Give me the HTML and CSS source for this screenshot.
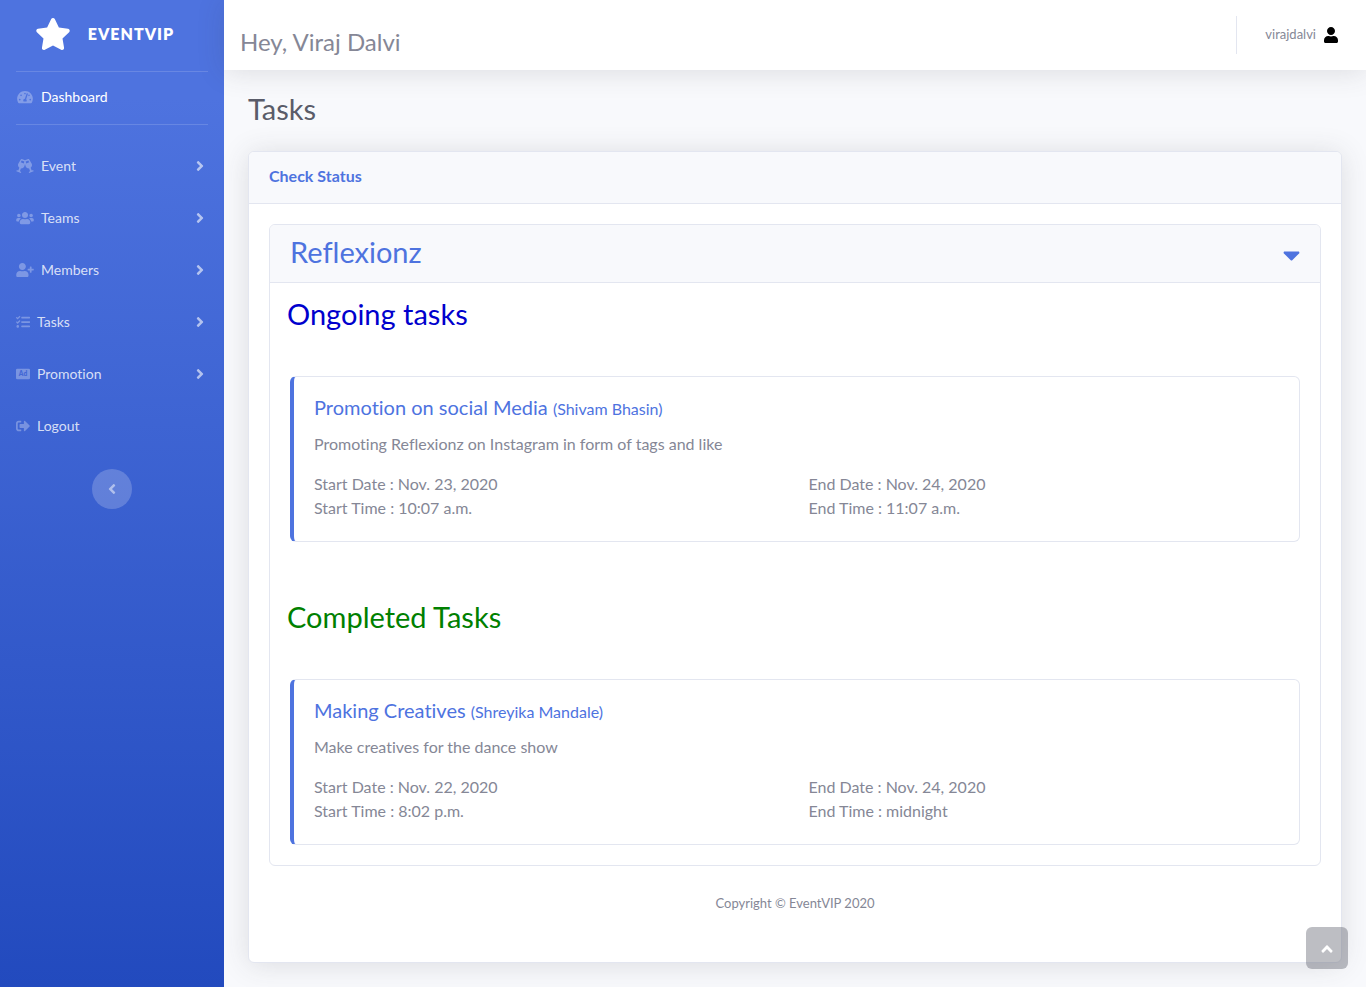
FILE: index.html
```html
<!DOCTYPE html>
<html lang="en">
<head>
<meta charset="utf-8">
<meta name="viewport" content="width=device-width, initial-scale=1">
<title>EventVIP - Tasks</title>
<link rel="stylesheet" href="styles.css">
</head>
<body>
<div class="wrapper">
  <nav class="sidebar" aria-label="Main">
    <a class="brand" href="#">
      <svg class="brand-icon" viewBox="0 0 576 512" aria-hidden="true"><path d="M259.3 17.8L194 150.2 47.9 171.5c-26.2 3.8-36.7 36.1-17.7 54.6l105.7 103-25 145.5c-4.5 26.3 23.2 46 46.4 33.7L288 439.6l130.7 68.7c23.2 12.2 50.9-7.4 46.4-33.7l-25-145.5 105.7-103c19-18.5 8.5-50.8-17.7-54.6L382 150.2 316.7 17.8c-11.7-23.6-45.6-23.9-57.4 0z"/></svg>
      <span>EVENTVIP</span>
    </a>
    <hr class="divider">
    <a class="nav-link active" href="#">
      <svg class="icon icon-wide" viewBox="0 0 576 512" aria-hidden="true"><path d="M288 32C128.94 32 0 160.94 0 320c0 52.8 14.25 102.26 39.06 144.8 5.61 9.62 16.3 15.2 27.44 15.2h443c11.14 0 21.83-5.58 27.44-15.2C561.75 422.26 576 372.8 576 320c0-159.06-128.94-288-288-288zm0 64c14.71 0 26.58 10.13 30.32 23.65-1.11 2.26-2.64 4.23-3.45 6.67l-9.22 27.67c-5.13 3.49-10.97 6.01-17.64 6.01-17.67 0-32-14.33-32-32S270.33 96 288 96zM96 384c-17.67 0-32-14.33-32-32s14.33-32 32-32 32 14.33 32 32-14.33 32-32 32zm48-160c-17.67 0-32-14.33-32-32s14.33-32 32-32 32 14.33 32 32-14.33 32-32 32zm246.77-72.41l-61.33 184C343.13 347.33 352 364.54 352 384c0 11.72-3.38 22.55-8.88 32H232.88c-5.5-9.45-8.88-20.28-8.88-32 0-33.94 26.5-61.43 59.9-63.59l61.34-184.01c4.17-12.56 17.73-19.45 30.36-15.17 12.57 4.19 19.35 17.79 15.17 30.36zm14.66 57.2l15.52-46.55c3.47-1.29 7.13-2.23 11.05-2.23 17.67 0 32 14.33 32 32s-14.33 32-32 32c-11.38-.01-20.89-6.28-26.57-15.22zM480 384c-17.67 0-32-14.33-32-32s14.33-32 32-32 32 14.33 32 32-14.33 32-32 32z"/></svg>
      <span>Dashboard</span>
    </a>
    <hr class="divider divider-gap">
    <a class="nav-link" href="#">
      <svg class="icon icon-wide" viewBox="0 0 640 512" aria-hidden="true"><path d="M639.4 433.6c-8.4-20.4-31.8-30.1-52.2-21.6l-22.1 9.2-38.7-101.9c47.9-35 64.8-100.3 34.5-152.8L474.3 16c-8-13.9-25.1-19.7-40-13.6L320 49.8 205.7 2.4c-14.9-6.2-32-.3-40 13.6L79.1 166.5C48.9 219 65.7 284.3 113.6 319.2L74.9 421.1l-22.1-9.2c-20.4-8.5-43.7 1.2-52.2 21.6-1.7 4.1.2 8.8 4.3 10.5l162.3 67.4c4.1 1.7 8.7-.2 10.4-4.3 8.4-20.4-1.2-43.8-21.6-52.3l-22.1-9.2L173.3 342c4.4.5 8.8 1.3 13.1 1.3 51.7 0 99.4-33.1 113.4-85.3l20.2-75.4 20.2 75.4c14 52.2 61.7 85.3 113.4 85.3 4.3 0 8.7-.8 13.1-1.3L506 445.6l-22.1 9.2c-20.4 8.5-30 31.9-21.6 52.3 1.7 4.1 6.4 6 10.4 4.3L635.1 444c4-1.7 6-6.3 4.3-10.4zM275.9 162.1l-112.1-46.5 36.5-63.4 94.5 39.2-18.9 70.7zm88.2 0l-18.9-70.7 94.5-39.2 36.5 63.4-112.1 46.5z"/></svg>
      <span>Event</span>
      <svg class="chevron" viewBox="0 0 256 512" aria-hidden="true"><path d="M224.3 273l-136 136c-9.4 9.4-24.6 9.4-33.9 0l-22.6-22.6c-9.4-9.4-9.4-24.6 0-33.9l96.4-96.4-96.4-96.4c-9.4-9.4-9.4-24.6 0-33.9L54.3 103c9.4-9.4 24.6-9.4 33.9 0l136 136c9.5 9.4 9.5 24.6.1 34z"/></svg>
    </a>
    <a class="nav-link" href="#">
      <svg class="icon icon-wide" viewBox="0 0 640 512" aria-hidden="true"><path d="M96 224c35.3 0 64-28.7 64-64s-28.7-64-64-64-64 28.7-64 64 28.7 64 64 64zm448 0c35.3 0 64-28.7 64-64s-28.7-64-64-64-64 28.7-64 64 28.7 64 64 64zm32 32h-64c-17.6 0-33.5 7.1-45.1 18.6 40.3 22.1 68.9 62 75.1 109.4h66c17.7 0 32-14.3 32-32v-32c0-35.3-28.7-64-64-64zm-256 0c61.9 0 112-50.1 112-112S381.9 32 320 32 208 82.1 208 144s50.1 112 112 112zm76.8 32h-8.3c-20.8 10-43.9 16-68.5 16s-47.6-6-68.5-16h-8.3C179.6 288 128 339.6 128 403.2V432c0 26.5 21.5 48 48 48h288c26.5 0 48-21.5 48-48v-28.8c0-63.6-51.6-115.2-115.2-115.2zm-223.7-13.4C161.5 263.1 145.6 256 128 256H64c-35.3 0-64 28.7-64 64v32c0 17.7 14.3 32 32 32h65.9c6.3-47.4 34.9-87.3 75.2-109.4z"/></svg>
      <span>Teams</span>
      <svg class="chevron" viewBox="0 0 256 512" aria-hidden="true"><path d="M224.3 273l-136 136c-9.4 9.4-24.6 9.4-33.9 0l-22.6-22.6c-9.4-9.4-9.4-24.6 0-33.9l96.4-96.4-96.4-96.4c-9.4-9.4-9.4-24.6 0-33.9L54.3 103c9.4-9.4 24.6-9.4 33.9 0l136 136c9.5 9.4 9.5 24.6.1 34z"/></svg>
    </a>
    <a class="nav-link" href="#">
      <svg class="icon icon-wide" viewBox="0 0 640 512" aria-hidden="true"><path d="M624 208h-64v-64c0-8.8-7.2-16-16-16h-32c-8.8 0-16 7.2-16 16v64h-64c-8.8 0-16 7.2-16 16v32c0 8.8 7.2 16 16 16h64v64c0 8.8 7.2 16 16 16h32c8.8 0 16-7.2 16-16v-64h64c8.8 0 16-7.2 16-16v-32c0-8.8-7.2-16-16-16zm-400 48c70.7 0 128-57.3 128-128S294.7 0 224 0 96 57.3 96 128s57.3 128 128 128zm89.6 32h-16.7c-22.2 10.2-46.9 16-72.9 16s-50.6-5.8-72.9-16h-16.7C60.2 288 0 348.2 0 422.4V464c0 26.5 21.5 48 48 48h352c26.5 0 48-21.5 48-48v-41.6c0-74.2-60.2-134.4-134.4-134.4z"/></svg>
      <span>Members</span>
      <svg class="chevron" viewBox="0 0 256 512" aria-hidden="true"><path d="M224.3 273l-136 136c-9.4 9.4-24.6 9.4-33.9 0l-22.6-22.6c-9.4-9.4-9.4-24.6 0-33.9l96.4-96.4-96.4-96.4c-9.4-9.4-9.4-24.6 0-33.9L54.3 103c9.4-9.4 24.6-9.4 33.9 0l136 136c9.5 9.4 9.5 24.6.1 34z"/></svg>
    </a>
    <a class="nav-link" href="#">
      <svg class="icon" viewBox="0 0 512 512" aria-hidden="true"><path d="M139.61 35.5a12 12 0 0 0-17 0L58.93 98.81l-22.7-22.12a12 12 0 0 0-17 0L3.53 92.41a12 12 0 0 0 0 17l47.59 47.4a12.78 12.78 0 0 0 17.61 0l15.59-15.62L156.52 69a12.09 12.09 0 0 0 .09-17zm0 159.19a12 12 0 0 0-17 0l-63.68 63.72-22.7-22.1a12 12 0 0 0-17 0L3.53 252a12 12 0 0 0 0 17L51 316.5a12.77 12.77 0 0 0 17.6 0l15.7-15.69 72.2-72.22a12 12 0 0 0 .09-16.9zM64 368c-26.49 0-48.59 21.5-48.59 48S37.53 464 64 464a48 48 0 0 0 0-96zm432 16H208a16 16 0 0 0-16 16v32a16 16 0 0 0 16 16h288a16 16 0 0 0 16-16v-32a16 16 0 0 0-16-16zm0-320H208a16 16 0 0 0-16 16v32a16 16 0 0 0 16 16h288a16 16 0 0 0 16-16V80a16 16 0 0 0-16-16zm0 160H208a16 16 0 0 0-16 16v32a16 16 0 0 0 16 16h288a16 16 0 0 0 16-16v-32a16 16 0 0 0-16-16z"/></svg>
      <span>Tasks</span>
      <svg class="chevron" viewBox="0 0 256 512" aria-hidden="true"><path d="M224.3 273l-136 136c-9.4 9.4-24.6 9.4-33.9 0l-22.6-22.6c-9.4-9.4-9.4-24.6 0-33.9l96.4-96.4-96.4-96.4c-9.4-9.4-9.4-24.6 0-33.9L54.3 103c9.4-9.4 24.6-9.4 33.9 0l136 136c9.5 9.4 9.5 24.6.1 34z"/></svg>
    </a>
    <a class="nav-link" href="#">
      <svg class="icon" viewBox="0 0 512 512" aria-hidden="true"><rect y="64" width="512" height="384" rx="48"/><text class="ad-text" x="256" y="340" text-anchor="middle">Ad</text></svg>
      <span>Promotion</span>
      <svg class="chevron" viewBox="0 0 256 512" aria-hidden="true"><path d="M224.3 273l-136 136c-9.4 9.4-24.6 9.4-33.9 0l-22.6-22.6c-9.4-9.4-9.4-24.6 0-33.9l96.4-96.4-96.4-96.4c-9.4-9.4-9.4-24.6 0-33.9L54.3 103c9.4-9.4 24.6-9.4 33.9 0l136 136c9.5 9.4 9.5 24.6.1 34z"/></svg>
    </a>
    <a class="nav-link" href="#">
      <svg class="icon" viewBox="0 0 512 512" aria-hidden="true"><path d="M497 273L329 441c-15 15-41 4.5-41-17v-96H152c-13.3 0-24-10.7-24-24v-96c0-13.3 10.7-24 24-24h136V88c0-21.4 25.9-32 41-17l168 168c9.3 9.4 9.3 24.6 0 34zM192 436v-40c0-6.6-5.4-12-12-12H96c-17.7 0-32-14.3-32-32V160c0-17.7 14.3-32 32-32h84c6.6 0 12-5.4 12-12V76c0-6.6-5.4-12-12-12H96c-53 0-96 43-96 96v192c0 53 43 96 96 96h84c6.6 0 12-5.4 12-12z"/></svg>
      <span>Logout</span>
    </a>
    <button class="sidebar-toggle" type="button" aria-label="Collapse sidebar">
      <svg viewBox="0 0 256 512" aria-hidden="true"><path d="M31.7 239l136-136c9.4-9.4 24.6-9.4 33.9 0l22.6 22.6c9.4 9.4 9.4 24.6 0 33.9L127.9 256l96.4 96.4c9.4 9.4 9.4 24.6 0 33.9L201.7 409c-9.4 9.4-24.6 9.4-33.9 0l-136-136c-9.5-9.4-9.5-24.6-.1-34z"/></svg>
    </button>
  </nav>

  <div class="content">
    <header class="topbar">
      <h2 class="greeting">Hey, Viraj Dalvi</h2>
      <a class="user" href="#">
        <span>virajdalvi</span>
        <svg viewBox="0 0 448 512" aria-hidden="true"><path d="M224 256c70.7 0 128-57.3 128-128S294.7 0 224 0 96 57.3 96 128s57.3 128 128 128zm89.6 32h-16.7c-22.2 10.2-46.9 16-72.9 16s-50.6-5.8-72.9-16h-16.7C60.2 288 0 348.2 0 422.4V464c0 26.5 21.5 48 48 48h352c26.5 0 48-21.5 48-48v-41.6c0-74.2-60.2-134.4-134.4-134.4z"/></svg>
      </a>
    </header>

    <main class="page">
      <h1 class="page-title">Tasks</h1>
      <section class="card card-shadow">
        <h2 class="card-header">Check Status</h2>
        <div class="card-body">
          <section class="card">
            <button class="event-header" type="button" aria-expanded="true">
              <span>Reflexionz</span>
              <svg viewBox="0 0 320 512" aria-hidden="true"><path d="M31.3 192h257.3c17.8 0 26.7 21.5 14.1 34.1L174.1 354.8c-7.8 7.8-20.5 7.8-28.3 0L17.2 226.1C4.6 213.5 13.5 192 31.3 192z"/></svg>
            </button>
            <h3 class="group-title ongoing">Ongoing tasks</h3>
            <article class="task">
              <h4 class="task-title">Promotion on social Media <small>(Shivam Bhasin)</small></h4>
              <p class="task-text">Promoting Reflexionz on Instagram in form of tags and like</p>
              <div class="task-times">
                <div>Start Date : Nov. 23, 2020<br>Start Time : 10:07 a.m.</div>
                <div>End Date : Nov. 24, 2020<br>End Time : 11:07 a.m.</div>
              </div>
            </article>
            <h3 class="group-title completed">Completed Tasks</h3>
            <article class="task">
              <h4 class="task-title">Making Creatives <small>(Shreyika Mandale)</small></h4>
              <p class="task-text">Make creatives for the dance show</p>
              <div class="task-times">
                <div>Start Date : Nov. 22, 2020<br>Start Time : 8:02 p.m.</div>
                <div>End Date : Nov. 24, 2020<br>End Time : midnight</div>
              </div>
            </article>
          </section>
          <footer class="footer">Copyright © EventVIP 2020</footer>
        </div>
      </section>
    </main>
  </div>
</div>
<a class="scroll-top" href="#" aria-label="Scroll to top">
  <svg viewBox="0 0 320 512" aria-hidden="true"><path d="M177 159.7l136 136c9.4 9.4 9.4 24.6 0 33.9l-22.6 22.6c-9.4 9.4-24.6 9.4-33.9 0L160 255.9l-96.4 96.4c-9.4 9.4-24.6 9.4-33.9 0L7 329.7c-9.4-9.4-9.4-24.6 0-33.9l136-136c9.4-9.5 24.6-9.5 34-.1z"/></svg>
</a>
</body>
</html>
```
FILE: styles.css
```css
*, *::before, *::after { box-sizing: border-box; }

body {
  margin: 0;
  font: 400 16px/24px Lato, "Liberation Sans", sans-serif;
  font-variant-ligatures: none;
  color: #858796;
  background: #f8f9fc;
}

h1, h2, h3, h4, p { margin: 0; font-weight: 400; }
a { color: inherit; text-decoration: none; }
svg { display: block; fill: currentColor; flex: none; }

.wrapper { display: flex; min-height: 100vh; }

/* Sidebar */
.sidebar {
  flex: none;
  width: 224px;
  display: flex;
  flex-direction: column;
  background: linear-gradient(180deg, #4e73df 10%, #224abe 100%);
}

.brand {
  height: 71px;
  display: flex;
  align-items: center;
  justify-content: center;
  gap: 17px;
  padding: 0 15px 3px 0;
  font-size: 16px;
  font-weight: 800;
  letter-spacing: 1px;
  color: #fff;
}
.brand-icon { width: 36px; height: 32px; }

.divider {
  width: calc(100% - 32px);
  margin: 0 16px;
  border: 0;
  border-top: 1px solid rgba(255, 255, 255, .15);
}
.divider-gap { margin-bottom: 16px; }

.nav-link {
  height: 52px;
  display: flex;
  align-items: center;
  gap: 7px;
  padding: 0 20px 2px 16px;
  font-size: 14px;
  color: rgba(255, 255, 255, .8);
}
.nav-link.active { color: #fff; }
.icon { width: 14px; height: 14px; color: rgba(255, 255, 255, .3); }
.icon-wide { width: 18px; }
.ad-text { font: 800 240px Lato, sans-serif; fill: #4468d5; }
.chevron { width: 8px; height: 16px; margin-left: auto; color: rgba(255, 255, 255, .6); }

.sidebar-toggle {
  width: 40px;
  height: 40px;
  margin: 16px auto 0;
  padding: 0;
  display: grid;
  place-items: center;
  border: 0;
  border-radius: 50%;
  background: rgba(255, 255, 255, .2);
  color: rgba(255, 255, 255, .5);
}
.sidebar-toggle svg { width: 8px; height: 16px; }

/* Top bar */
.content { flex: 1; min-width: 0; }

.topbar {
  height: 70px;
  display: flex;
  align-items: center;
  justify-content: space-between;
  padding: 0 16px;
  background: #fff;
  box-shadow: 0 2px 28px rgba(58, 59, 69, .15);
}
.greeting { padding-top: 14px; font-size: 24px; line-height: 28px; }
.user {
  height: 38px;
  display: flex;
  align-items: center;
  gap: 8px;
  padding: 0 12px 0 28px;
  border-left: 1px solid #e3e6f0;
  font-size: 13px;
}
.user span { padding-bottom: 2px; }
.user svg { width: 14px; height: 16px; color: #000; }

/* Page */
.page { padding: 22px 24px 24px; }
.page-title { margin-bottom: 25px; font-size: 29px; line-height: 34px; color: #5a5c69; }

.card {
  border: 1px solid #e3e6f0;
  border-radius: 6px;
  background: #fff;
}
.card-shadow { box-shadow: 0 2px 28px rgba(58, 59, 69, .15); }
.card-header {
  padding: 12px 20px 15px;
  border-bottom: 1px solid #e3e6f0;
  border-radius: 5px 5px 0 0;
  background: #f8f9fc;
  font-size: 16px;
  font-weight: 700;
  color: #4e73df;
}
.card-body { padding: 20px 20px 47px; }

.event-header {
  width: 100%;
  height: 58px;
  display: flex;
  align-items: center;
  justify-content: space-between;
  padding: 0 20px;
  border: 0;
  border-bottom: 1px solid #e3e6f0;
  border-radius: 5px 5px 0 0;
  background: #f8f9fc;
  font: inherit;
  font-size: 29px;
  line-height: 34px;
  color: #4e73df;
}
.event-header span { padding-bottom: 3px; }
.event-header svg { width: 17px; height: 28px; margin-top: 3px; }

.group-title { padding: 14px 17px 45px; font-size: 29px; line-height: 34px; }
.ongoing { color: #0000cd; }
.completed { padding-top: 38px; color: #008000; }

.task {
  margin: 0 20px 20px;
  padding: 18px 20px 21px;
  border: 1px solid #e3e6f0;
  border-left: 4px solid #4e73df;
  border-radius: 6px;
}
.task-title { margin-bottom: 11px; font-size: 20px; line-height: 24px; color: #4e73df; }
.task-title small { font-size: 16px; }
.task-text { margin-bottom: 16px; }
.task-times { display: grid; grid-template-columns: 1fr 1fr; gap: 24px; }

.footer { padding-top: 25px; font-size: 13px; text-align: center; }

.scroll-top {
  position: fixed;
  right: 18px;
  bottom: 18px;
  width: 42px;
  height: 42px;
  display: grid;
  place-items: center;
  padding-top: 2px;
  border-radius: 6px;
  background: rgba(90, 92, 105, .4);
  color: #fff;
}
.scroll-top svg { width: 12px; height: 18px; }
```
